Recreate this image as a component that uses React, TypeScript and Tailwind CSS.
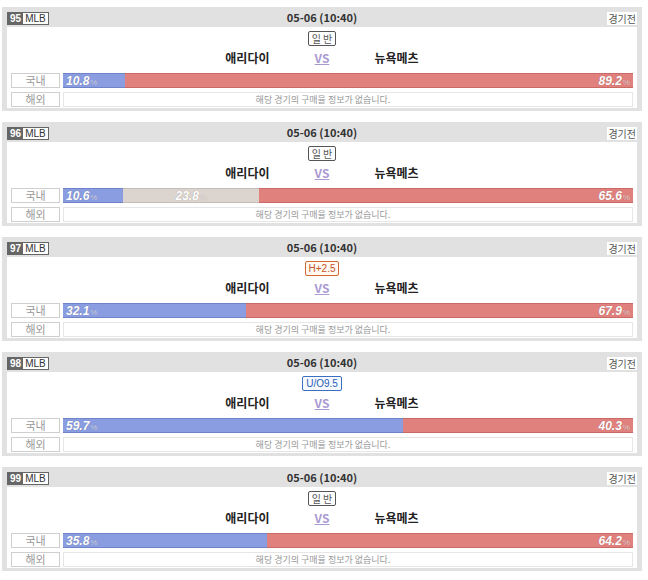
import React from "react";

type Game = {
  no: number;
  kind: "normal" | "handi" | "uo";
  label: string;
  home: number;
  draw?: number;
  away: number;
};

const games: Game[] = [
  { no: 95, kind: "normal", label: "일 반", home: 10.8, away: 89.2 },
  { no: 96, kind: "normal", label: "일 반", home: 10.6, draw: 23.8, away: 65.6 },
  { no: 97, kind: "handi", label: "H+2.5", home: 32.1, away: 67.9 },
  { no: 98, kind: "uo", label: "U/O9.5", home: 59.7, away: 40.3 },
  { no: 99, kind: "normal", label: "일 반", home: 35.8, away: 64.2 },
];

const FONT = { fontFamily: '"Noto Sans CJK KR", "Noto Sans", sans-serif' };
const NUM = { fontFamily: '"Liberation Sans", Arial, sans-serif' };

function PctText({ v }: { v: number }) {
  return (
    <span
      className="text-[12px] font-bold italic text-white"
      style={{ ...NUM, textShadow: "0 0 1px rgba(0,0,0,0.3)" }}
    >
      {v.toFixed(1)}
      <span className="text-[8px] not-italic font-normal text-white/70 ml-[1px]">%</span>
    </span>
  );
}

function TypeBadge({ g }: { g: Game }) {
  const cls =
    g.kind === "handi"
      ? "border-[#d2692e] text-[#c4552a] bg-[#fff9f2]"
      : g.kind === "uo"
      ? "border-[#3b6fc4] text-[#2a5fb8] bg-[#f6faff]"
      : "border-[#555] text-[#555] bg-white";
  return (
    <div
      className={`h-[15px] px-[3px] border rounded-[2px] text-[10px] leading-[13px] ${cls}`}
      style={g.kind === "normal" ? FONT : NUM}
    >
      {g.label}
    </div>
  );
}

function Card({ g }: { g: Game }) {
  const segs = [
    { v: g.home, bg: "bg-[#8a9de0]", bd: "border-[#6f83c9]" },
    ...(g.draw !== undefined ? [{ v: g.draw, bg: "bg-[#dcd4ce]", bd: "border-[#c6bdb6]" }] : []),
    { v: g.away, bg: "bg-[#e1817e]", bd: "border-[#c96a67]" },
  ];
  return (
    <div className="ml-[2px] w-[640px] bg-[#e1e1e1] px-[5px] pb-[3px]" style={FONT}>
      <div className="h-[20px] relative flex items-center justify-center">
        <div className="absolute left-0 top-[5px] flex h-[13px] border border-[#666] text-[10px] leading-[11px]">
          <span className="bg-[#666] text-white font-bold px-[2px]" style={NUM}>{g.no}</span>
          <span className="bg-white text-[#333] px-[2px]" style={NUM}>MLB</span>
        </div>
        <span className="text-[11px] font-bold text-[#333] mt-[1px]">05-06 (10:40)</span>
        <div className="absolute right-0 top-[5px] h-[13px] bg-white px-[1px] text-[10px] leading-[13px] text-[#555]">
          경기전
        </div>
      </div>
      <div className="bg-white pt-[4px] pb-[1px] px-[4px]">
        <div className="flex justify-center">
          <TypeBadge g={g} />
        </div>
        <div className="flex items-center justify-center h-[23px] text-[12px] font-bold text-[#222]">
          <span className="w-[60px] text-right">애리다이</span>
          <span className="w-[105px] text-center text-[#a99ad2] underline">VS</span>
          <span className="w-[60px] text-left">뉴욕메츠</span>
        </div>
        <div className="h-[4px]" />
        <div className="flex items-stretch gap-[3px] h-[15px]">
          <div className="w-[49px] border border-[#cfcfcf] text-[11px] text-[#999] flex items-center justify-center">
            국내
          </div>
          <div className="flex-1 flex">
            {segs.map((s, i) => (
              <div
                key={i}
                className={`relative h-full border-y ${s.bg} ${s.bd}`}
                style={{ width: `${s.v}%` }}
              >
                {i === 0 && (
                  <span className="absolute left-[3px] top-0 bottom-0 flex items-center">
                    <PctText v={s.v} />
                  </span>
                )}
                {i === segs.length - 1 && (
                  <span className="absolute right-[3px] top-0 bottom-0 flex items-center">
                    <PctText v={s.v} />
                  </span>
                )}
                {i === 1 && segs.length === 3 && (
                  <span className="absolute inset-0 flex items-center justify-center">
                    <PctText v={s.v} />
                  </span>
                )}
              </div>
            ))}
          </div>
        </div>
        <div className="flex items-stretch gap-[3px] h-[15px] mt-[4px]">
          <div className="w-[49px] border border-[#cfcfcf] text-[11px] text-[#999] flex items-center justify-center">
            해외
          </div>
          <div className="flex-1 border border-[#e6e6e6] text-[9px] text-[#999] flex items-center justify-center pr-[50px]">
            해당 경기의 구매율 정보가 없습니다.
          </div>
        </div>
      </div>
    </div>
  );
}

export default function App() {
  return (
    <div className="bg-white w-[648px] h-[580px] pt-[7px] flex flex-col gap-[11px]">
      {games.map((g) => (
        <Card key={g.no} g={g} />
      ))}
    </div>
  );
}
